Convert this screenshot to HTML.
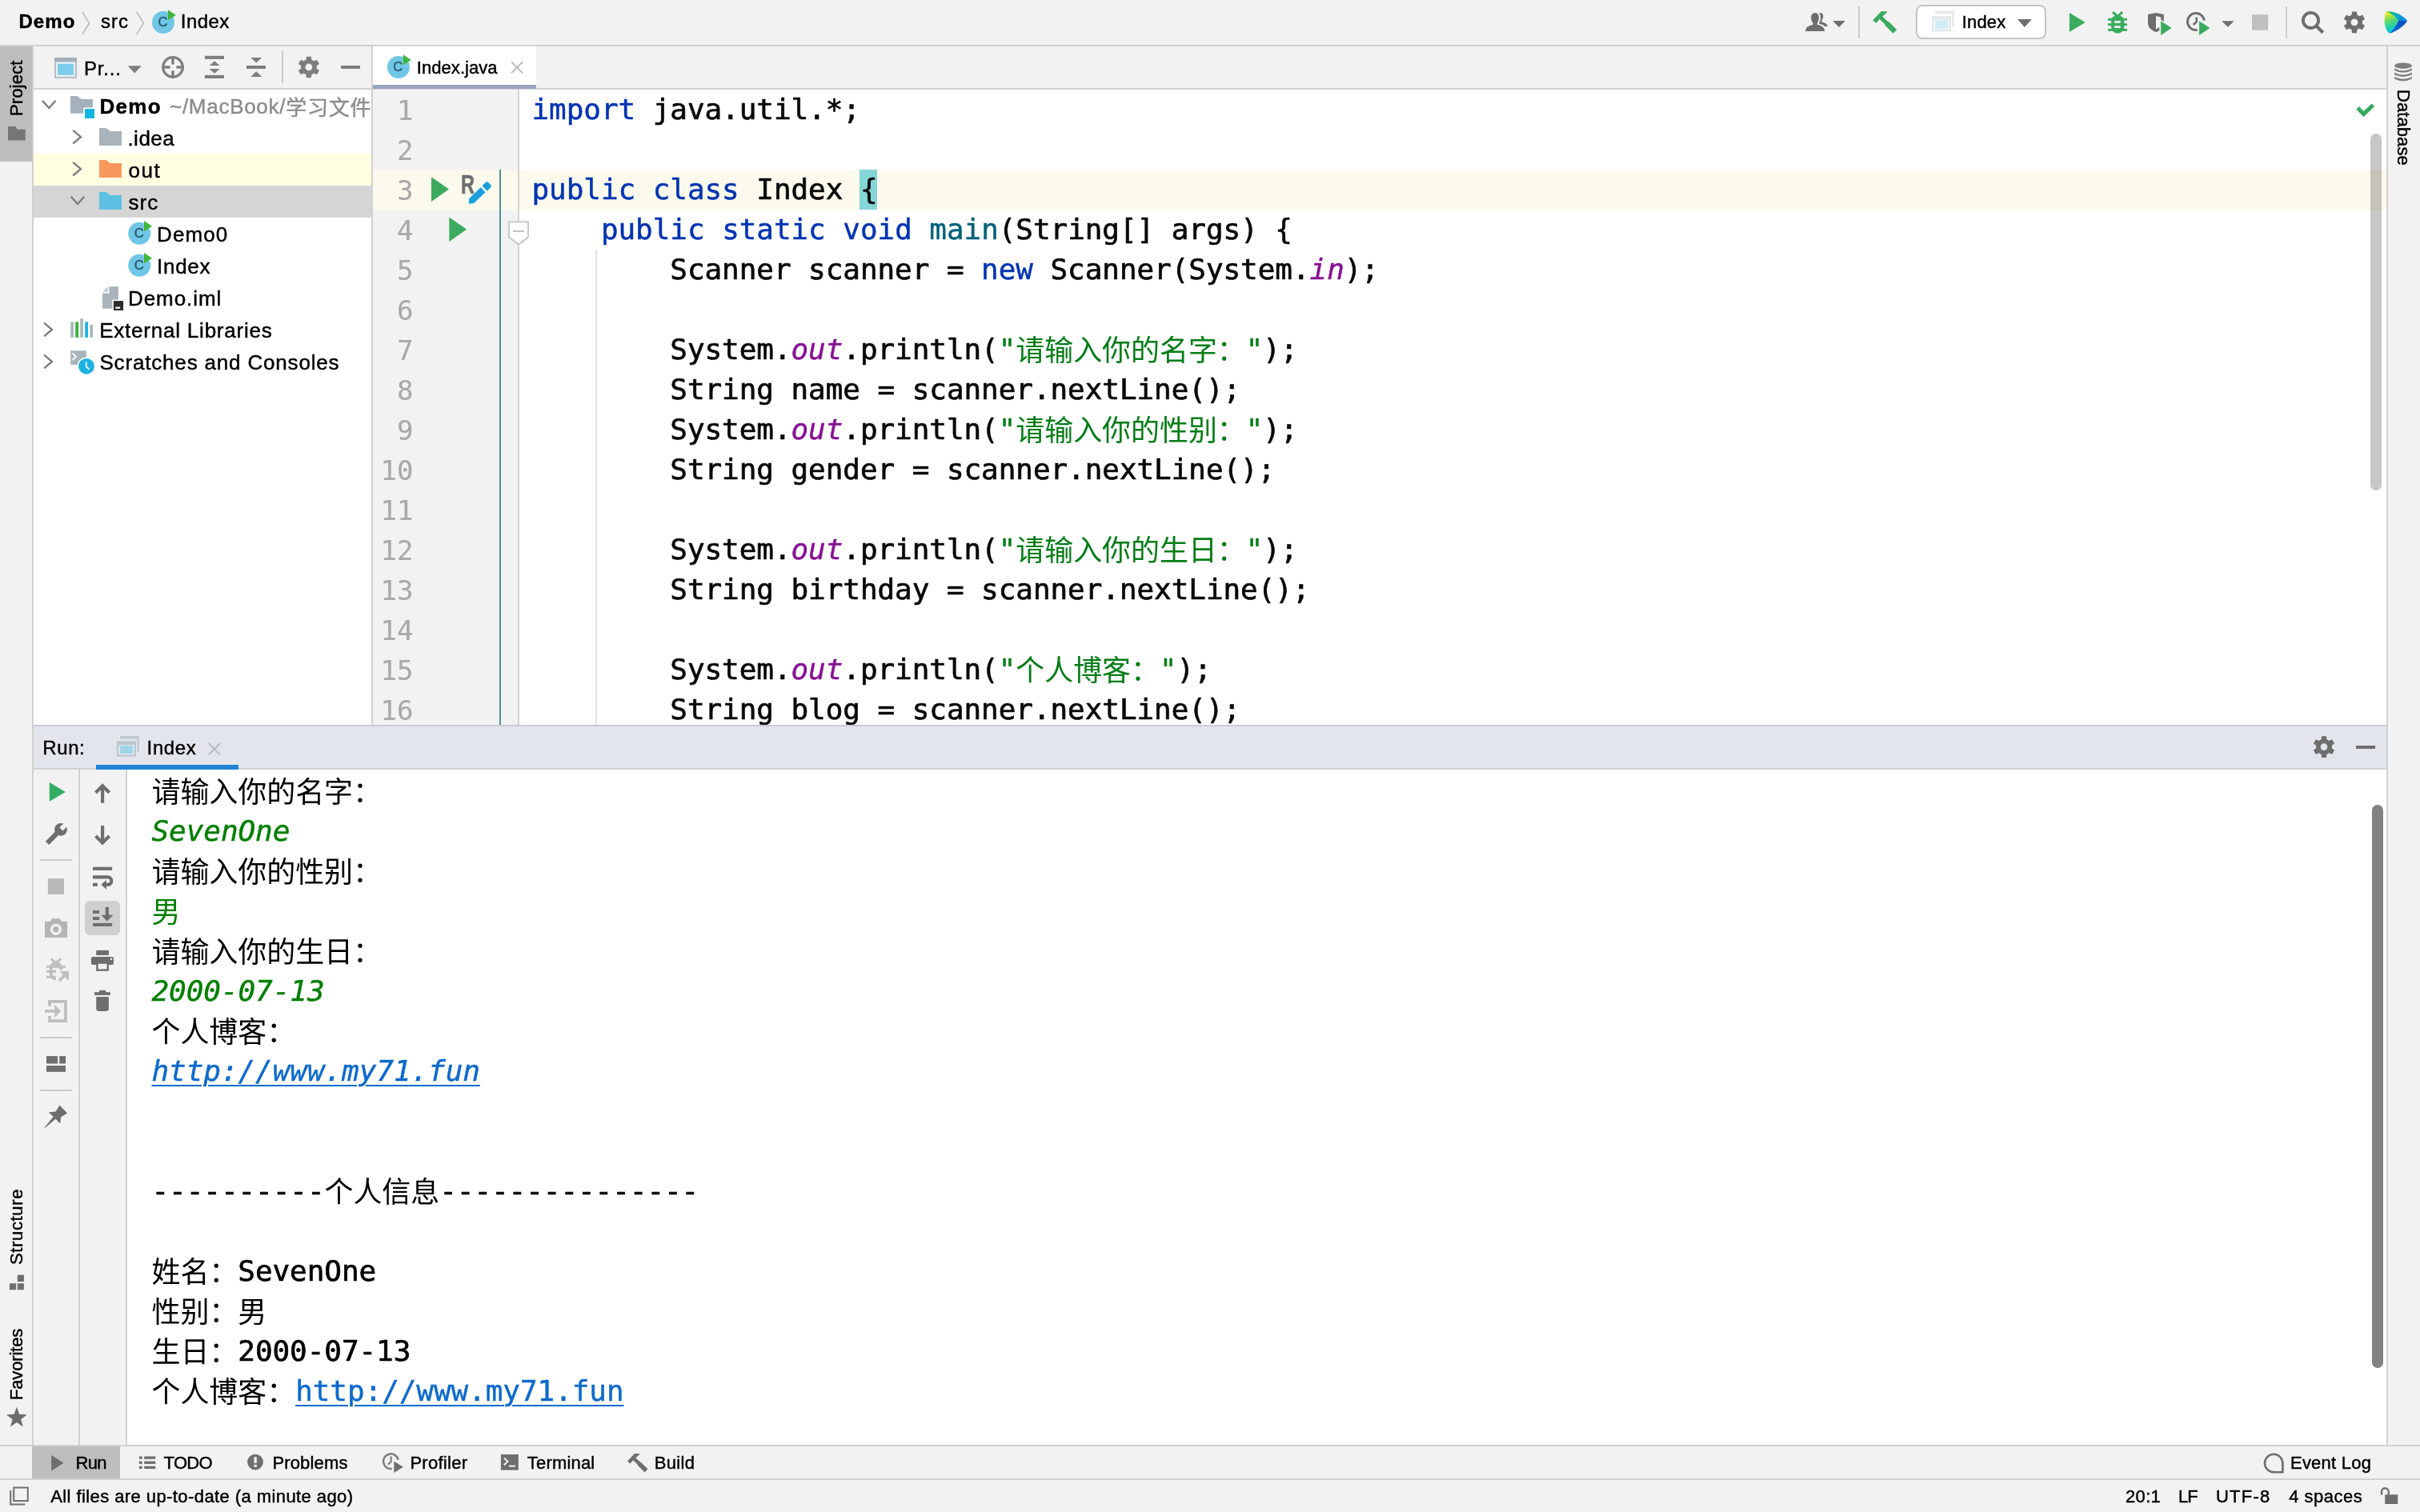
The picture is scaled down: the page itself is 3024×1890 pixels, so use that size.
<!DOCTYPE html>
<html lang="zh"><head><meta charset="utf-8"><title>Demo – Index.java</title>
<style>
html,body{margin:0;padding:0;}
body{width:3024px;height:1890px;position:relative;overflow:hidden;background:#f2f2f2;font-family:"Liberation Sans","Noto Sans CJK SC",sans-serif;}
div,span,pre,svg{position:absolute;margin:0;padding:0;}
span{white-space:pre;display:block;-webkit-text-stroke:0.45px;}
span span,span i,span u,span a{position:static;display:inline;}
.m{font-family:"DejaVu Sans Mono","Liberation Mono","Noto Sans CJK SC",monospace;}
.c{font-family:"DejaVu Sans Mono","Liberation Mono","Noto Sans CJK SC",monospace;font-size:36px;line-height:50px;letter-spacing:-0.074px;color:#080808;-webkit-text-stroke:0.7px;}.k{color:#0033b3;}.f{color:#00627a;}.p{color:#871094;font-style:italic;}.s{color:#067d17;}.z{position:relative;top:1.6px;-webkit-text-stroke:0;}.n{color:#a9a9a9;text-align:right;width:120px;font-size:34px;letter-spacing:0;-webkit-text-stroke:0.15px;}.g{color:#007f00;}.gi{color:#007f00;font-style:italic;}.l{color:#0e6acc;text-decoration:underline;text-decoration-thickness:2px;text-underline-offset:5px;}.li{font-style:italic;}
#root{left:0;top:0;width:3024px;height:1890px;will-change:transform;}
</style></head><body><div id="root">
<div style="left:0px;top:56px;width:3024px;height:2px;background:#d1d1d1;"></div>
<span style="left:23.40px;top:9.18px;font-size:24px;line-height:36px;font-weight:bold;letter-spacing:1.100px;">Demo</span>
<span style="left:126.00px;top:9.18px;font-size:24px;line-height:36px;letter-spacing:1.050px;">src</span>
<span style="left:225.80px;top:9.18px;font-size:24px;line-height:36px;letter-spacing:0.450px;">Index</span>
<div style="left:2394px;top:6px;width:163px;height:43px;background:#fff;box-sizing:border-box;border:2px solid #c4c4c4;border-radius:8px;"></div>
<span style="left:2451.80px;top:11.48px;font-size:22px;line-height:33px;letter-spacing:0.150px;">Index</span>
<div style="left:0px;top:58px;width:40px;height:144px;background:#bebebe;"></div>
<div style="left:40px;top:58px;width:2px;height:1748px;background:#d1d1d1;"></div>
<span style="left:28.00px;top:121.08px;transform-origin:0 24.12px;transform:rotate(-90deg);font-size:22px;line-height:33px;letter-spacing:0.167px;">Project</span>
<span style="left:27.80px;top:1557.28px;transform-origin:0 24.12px;transform:rotate(-90deg);font-size:22px;line-height:33px;letter-spacing:0.662px;">Structure</span>
<span style="left:27.80px;top:1725.68px;transform-origin:0 24.12px;transform:rotate(-90deg);font-size:22px;line-height:33px;letter-spacing:-0.138px;">Favorites</span>
<div style="left:42px;top:110px;width:422px;height:2px;background:#d1d1d1;"></div>
<div style="left:42px;top:112px;width:422px;height:794px;background:#fff;"></div>
<div style="left:42px;top:192px;width:422px;height:40px;background:#feffe1;"></div>
<div style="left:42px;top:232px;width:422px;height:40px;background:#d5d5d5;"></div>
<div style="left:464px;top:58px;width:2px;height:848px;background:#d1d1d1;"></div>
<span style="left:105.00px;top:67.68px;font-size:24px;line-height:36px;letter-spacing:0.800px;">Pr...</span>
<span style="left:124.40px;top:113.59px;font-size:26px;line-height:39px;font-weight:bold;letter-spacing:1.300px;">Demo</span>
<span style="left:159.40px;top:153.59px;font-size:26px;line-height:39px;letter-spacing:0.500px;">.idea</span>
<span style="left:160.60px;top:193.59px;font-size:26px;line-height:39px;letter-spacing:1.500px;">out</span>
<span style="left:160.60px;top:233.59px;font-size:26px;line-height:39px;letter-spacing:0.950px;">src</span>
<span style="left:196.00px;top:273.59px;font-size:26px;line-height:39px;letter-spacing:1.100px;">Demo0</span>
<span style="left:196.00px;top:313.59px;font-size:26px;line-height:39px;letter-spacing:0.725px;">Index</span>
<span style="left:160.00px;top:353.59px;font-size:26px;line-height:39px;letter-spacing:0.929px;">Demo.iml</span>
<span style="left:124.20px;top:393.59px;font-size:26px;line-height:39px;letter-spacing:0.782px;">External Libraries</span>
<span style="left:124.40px;top:433.59px;font-size:26px;line-height:39px;letter-spacing:0.829px;">Scratches and Consoles</span>
<div style="left:205px;top:112px;width:259px;height:40px;overflow:hidden">
<span style="left:7.00px;top:1.59px;font-size:26px;line-height:39px;color:#8c8c8c;letter-spacing:0.720px;">~/MacBook/<span style="position:relative;top:2px">学习文件</span>/</span>
</div>
<div style="left:466px;top:110px;width:2516px;height:2px;background:#d1d1d1;"></div>
<div style="left:466px;top:58px;width:204px;height:52px;background:#fff;"></div>
<div style="left:466px;top:106px;width:204px;height:5.4px;background:#99a6c2;"></div>
<span style="left:520.80px;top:68.08px;font-size:22px;line-height:33px;letter-spacing:0.056px;">Index.java</span>
<div style="left:466px;top:112px;width:2516px;height:794px;background:#fff;"></div>
<div style="left:466px;top:112px;width:182px;height:794px;background:#f2f2f2;"></div>
<div style="left:466px;top:212px;width:2516px;height:50px;background:#fcfaed;"></div>
<div style="left:647px;top:112px;width:2px;height:794px;background:#d4d4d4;"></div>
<div style="left:624px;top:212px;width:2px;height:694px;background:#508e99;"></div>
<div style="left:744px;top:312px;width:2px;height:594px;background:#e2e2e2;"></div>
<div style="left:1074px;top:212px;width:22px;height:50px;background:#84d6d7;"></div>
<div style="left:2962px;top:167px;width:14px;height:446px;background:rgba(0,0,0,0.22);border-radius:7px;"></div>
<div style="left:2982px;top:58px;width:2px;height:1748px;background:#d1d1d1;"></div>
<span style="left:2996.00px;top:88.48px;transform-origin:0 24.12px;transform:rotate(90deg);font-size:22px;line-height:33px;letter-spacing:0.057px;">Database</span>
<div style="left:42px;top:906px;width:2940px;height:2px;background:#c9ccd2;"></div>
<div style="left:42px;top:908px;width:2940px;height:52px;background:#e2e6ec;"></div>
<div style="left:42px;top:960px;width:2940px;height:2px;background:#cfd1d4;"></div>
<div style="left:120px;top:956px;width:178px;height:6px;background:#2083d5;"></div>
<div style="left:42px;top:962px;width:2940px;height:844px;background:#fff;"></div>
<div style="left:42px;top:962px;width:56px;height:844px;background:#f2f2f2;"></div>
<div style="left:98px;top:962px;width:2px;height:844px;background:#d1d1d1;"></div>
<div style="left:100px;top:962px;width:57px;height:844px;background:#f2f2f2;"></div>
<div style="left:157px;top:962px;width:2px;height:844px;background:#d1d1d1;"></div>
<div style="left:106px;top:1126px;width:44px;height:43px;background:#cfcfcf;border-radius:6px;"></div>
<span style="left:53.20px;top:917.38px;font-size:24px;line-height:36px;letter-spacing:0.633px;">Run:</span>
<span style="left:183.60px;top:917.38px;font-size:24px;line-height:36px;letter-spacing:0.625px;">Index</span>
<div style="left:2964px;top:1006px;width:14px;height:704px;background:#828282;border-radius:7px;"></div>
<div style="left:0px;top:1806px;width:3024px;height:2px;background:#d1d1d1;"></div>
<div style="left:40px;top:1808px;width:110px;height:40px;background:#bdbdbd;"></div>
<div style="left:0px;top:1848px;width:3024px;height:2px;background:#d1d1d1;"></div>
<span style="left:94.40px;top:1811.58px;font-size:22px;line-height:33px;letter-spacing:-0.650px;">Run</span>
<span style="left:204.60px;top:1811.58px;font-size:22px;line-height:33px;letter-spacing:-0.700px;">TODO</span>
<span style="left:340.40px;top:1811.58px;font-size:22px;line-height:33px;letter-spacing:0.157px;">Problems</span>
<span style="left:512.40px;top:1811.58px;font-size:22px;line-height:33px;letter-spacing:0.271px;">Profiler</span>
<span style="left:658.80px;top:1811.58px;font-size:22px;line-height:33px;letter-spacing:0.186px;">Terminal</span>
<span style="left:817.80px;top:1811.58px;font-size:22px;line-height:33px;letter-spacing:0.325px;">Build</span>
<span style="left:2862.00px;top:1811.58px;font-size:22px;line-height:33px;letter-spacing:0.225px;">Event Log</span>
<span style="left:63.20px;top:1853.58px;font-size:22px;line-height:33px;letter-spacing:0.418px;">All files are up-to-date (a minute ago)</span>
<span style="left:2656.00px;top:1853.58px;font-size:22px;line-height:33px;letter-spacing:0.333px;">20:1</span>
<span style="left:2722.00px;top:1853.58px;font-size:22px;line-height:33px;letter-spacing:-1.000px;">LF</span>
<span style="left:2769.00px;top:1853.58px;font-size:22px;line-height:33px;letter-spacing:1.225px;">UTF-8</span>
<span style="left:2860.20px;top:1853.58px;font-size:22px;line-height:33px;letter-spacing:0.514px;">4 spaces</span>
<div style="left:466px;top:112px;width:2516px;height:794px;overflow:hidden">
<span class="c n" style="left:-69.60000000000002px;top:0.5px">1</span>
<span class="c" style="left:198.5px;top:0.3px"><span class="k">import</span> java.util.*;</span>
<span class="c n" style="left:-69.60000000000002px;top:50.5px">2</span>
<span class="c n" style="left:-69.60000000000002px;top:100.5px">3</span>
<span class="c" style="left:198.5px;top:100.3px"><span class="k">public</span> <span class="k">class</span> Index {</span>
<span class="c n" style="left:-69.60000000000002px;top:150.5px">4</span>
<span class="c" style="left:198.5px;top:150.3px">    <span class="k">public</span> <span class="k">static</span> <span class="k">void</span> <span class="f">main</span>(String[] args) {</span>
<span class="c n" style="left:-69.60000000000002px;top:200.5px">5</span>
<span class="c" style="left:198.5px;top:200.3px">        Scanner scanner = <span class="k">new</span> Scanner(System.<span class="p">in</span>);</span>
<span class="c n" style="left:-69.60000000000002px;top:250.5px">6</span>
<span class="c n" style="left:-69.60000000000002px;top:300.5px">7</span>
<span class="c" style="left:198.5px;top:300.3px">        System.<span class="p">out</span>.println(<span class="s">"<span class="z">请输入你的名字：</span>"</span>);</span>
<span class="c n" style="left:-69.60000000000002px;top:350.5px">8</span>
<span class="c" style="left:198.5px;top:350.3px">        String name = scanner.nextLine();</span>
<span class="c n" style="left:-69.60000000000002px;top:400.5px">9</span>
<span class="c" style="left:198.5px;top:400.3px">        System.<span class="p">out</span>.println(<span class="s">"<span class="z">请输入你的性别：</span>"</span>);</span>
<span class="c n" style="left:-69.60000000000002px;top:450.5px">10</span>
<span class="c" style="left:198.5px;top:450.3px">        String gender = scanner.nextLine();</span>
<span class="c n" style="left:-69.60000000000002px;top:500.5px">11</span>
<span class="c n" style="left:-69.60000000000002px;top:550.5px">12</span>
<span class="c" style="left:198.5px;top:550.3px">        System.<span class="p">out</span>.println(<span class="s">"<span class="z">请输入你的生日：</span>"</span>);</span>
<span class="c n" style="left:-69.60000000000002px;top:600.5px">13</span>
<span class="c" style="left:198.5px;top:600.3px">        String birthday = scanner.nextLine();</span>
<span class="c n" style="left:-69.60000000000002px;top:650.5px">14</span>
<span class="c n" style="left:-69.60000000000002px;top:700.5px">15</span>
<span class="c" style="left:198.5px;top:700.3px">        System.<span class="p">out</span>.println(<span class="s">"<span class="z">个人博客：</span>"</span>);</span>
<span class="c n" style="left:-69.60000000000002px;top:750.5px">16</span>
<span class="c" style="left:198.5px;top:750.3px">        String blog = scanner.nextLine();</span>
</div>
<span class="c" style="color:#000;left:189.5px;top:964.3px"><span class="z">请输入你的名字：</span></span>
<span class="c" style="color:#000;left:189.5px;top:1014.3px"><span class="gi">SevenOne</span></span>
<span class="c" style="color:#000;left:189.5px;top:1064.3px"><span class="z">请输入你的性别：</span></span>
<span class="c" style="color:#000;left:189.5px;top:1114.3px"><span class="g"><span class="z">男</span></span></span>
<span class="c" style="color:#000;left:189.5px;top:1164.3px"><span class="z">请输入你的生日：</span></span>
<span class="c" style="color:#000;left:189.5px;top:1214.3px"><span class="gi">2000-07-13</span></span>
<span class="c" style="color:#000;left:189.5px;top:1264.3px"><span class="z">个人博客：</span></span>
<span class="c" style="color:#000;left:189.5px;top:1314.3px"><span class="l li">http://www.my71.fun</span></span>
<span class="c" style="color:#000;left:189.5px;top:1464.3px">----------<span class="z">个人信息</span>---------------</span>
<span class="c" style="color:#000;left:189.5px;top:1564.3px"><span class="z">姓名：</span>SevenOne</span>
<span class="c" style="color:#000;left:189.5px;top:1614.3px"><span class="z">性别：男</span></span>
<span class="c" style="color:#000;left:189.5px;top:1664.3px"><span class="z">生日：</span>2000-07-13</span>
<span class="c" style="color:#000;left:189.5px;top:1714.3px"><span class="z">个人博客：</span><span class="l">http://www.my71.fun</span></span>
<svg width="3024" height="1890" viewBox="0 0 3024 1890" style="left:0;top:0">
<path d="M102.80 14.60 L111.60 28.90 L102.80 43.20" fill="none" stroke="#b9b9b9" stroke-width="1.6" />
<path d="M170.60 14.60 L179.40 28.90 L170.60 43.20" fill="none" stroke="#b9b9b9" stroke-width="1.6" />
<circle cx="204.00" cy="28.00" r="14.00" fill="#6fc6e7" />
<text x="203.40" y="33.30" text-anchor="middle" font-size="16.5" fill="#2b5a6c" stroke="#2b5a6c" stroke-width="0.45" style="font-family:'Liberation Sans',sans-serif">C</text>
<polygon points="209.30,11.60 209.30,26.10 220.60,18.80" fill="#f2f2f2" fill-opacity="0.35"/>
<polygon points="209.80,12.30 209.80,25.60 219.80,18.90" fill="#3fb43c" />
<path d="M2273.1 16.1 C2276.5 15.6 2278.4 17.4 2278.2 20.6 C2278.0 23.0 2277.2 24.6 2276.4 25.9 L2276.6 27.4 C2280.8 28.4 2283.4 30.0 2283.9 32.9 L2280.2 32.9 C2278.0 31.0 2275.6 30.2 2272.9 29.6 L2272.9 29.0 C2274.6 27.0 2275.1 24.0 2275.0 21.8 C2274.9 19.4 2274.4 17.6 2273.1 16.1 Z" fill="#6e6e6e" />
<path d="M2256 38.9 C2256.4 34.5 2259 32.4 2265.3 31.0 L2265.6 29.0 C2263.6 27.0 2263.1 24.5 2263.1 21.8 C2263.1 18.0 2265.2 16.2 2268.0 16.2 C2270.8 16.2 2272.9 18.0 2272.9 21.8 C2272.9 24.5 2272.4 27.0 2270.7 29.0 L2271.0 30.7 C2277.0 32.2 2279.8 34.5 2280.1 38.9 Z" fill="#6e6e6e" />
<polygon points="2290.20,26.10 2305.80,26.10 2298.00,34.00" fill="#6e6e6e" />
<rect x="2322.00" y="8.00" width="2.00" height="40.00" fill="#cdcdcd" />
<polygon points="2340.20,25.30 2350.60,14.20 2357.90,14.20 2357.90,15.60 2352.20,20.50 2358.60,26.40 2360.50,27.50 2370.20,36.90 2365.60,41.80 2355.40,31.60 2355.10,30.00 2348.60,23.90 2344.30,28.90" fill="#39aa60" />
<rect x="2418.20" y="13.80" width="23.70" height="3.50" fill="#e6e9ec" />
<rect x="2439.40" y="13.80" width="2.50" height="19.60" fill="#e6e9ec" />
<rect x="2414.00" y="20.00" width="24.10" height="19.40" fill="#e3e8ec" />
<rect x="2416.20" y="24.80" width="19.70" height="12.40" fill="#ffffff" fill-opacity="0.55"/>
<rect x="2418.30" y="25.80" width="15.80" height="9.90" fill="#d2ebf6" />
<polygon points="2521.00,24.00 2538.80,24.00 2529.90,33.90" fill="#6e6e6e" />
<polygon points="2586.00,16.00 2586.00,40.00 2605.80,28.00" fill="#3aab5f" />
<g transform="translate(2634.0 14.1)">
<path d="M6.0 1.0 L11.6 6.0 M18.2 1.0 L12.6 6.0" stroke="#3aab5f" stroke-width="3.2" fill="none"/>
<path d="M12.1 4.9 C17.4 4.9 20.3 8.6 20.3 12.6 L20.3 19.4 C20.3 24.2 16.6 27.5 12.1 27.5 C7.6 27.5 4.2 24.2 4.2 19.4 L4.2 12.6 C4.2 8.6 6.8 4.9 12.1 4.9 Z" fill="#3aab5f" />
<rect x="0.00" y="8.70" width="24.00" height="2.90" fill="#3aab5f" />
<rect x="0.00" y="15.10" width="24.00" height="2.90" fill="#3aab5f" />
<rect x="0.00" y="21.90" width="24.00" height="2.90" fill="#3aab5f" />
<rect x="8.10" y="12.00" width="7.70" height="2.70" fill="#f2f2f2" />
<rect x="8.10" y="18.20" width="7.70" height="2.70" fill="#f2f2f2" />
</g>
<path d="M2684.0 18.0 L2694 16.0 L2703.9 18.0 L2703.9 30.9 C2703.4 35.4 2699.4 38.2 2694 40.0 C2687.6 37.6 2684.0 34.0 2684.0 28.4 Z" fill="#6e6e6e" />
<path d="M2694 19.9 L2700.2 21.4 L2700.2 30.5 C2700.2 33.0 2697.5 35.0 2694 36.2 Z" fill="#f2f2f2" />
<polygon points="2698.40,23.40 2698.40,46.80 2716.60,35.10" fill="#f2f2f2" />
<polygon points="2700.20,26.30 2700.20,43.90 2713.60,35.10" fill="#3aab5f" />
<path d="M2754.4 25.6 A10.5 10.5 0 1 0 2745.8 37.4" fill="none" stroke="#6e6e6e" stroke-width="2.9"/>
<path d="M2744.80 21.40 L2744.80 27.20 L2740.60 31.00" fill="none" stroke="#6e6e6e" stroke-width="2.6" />
<polygon points="2746.40,23.40 2746.40,46.80 2764.40,35.10" fill="#f2f2f2" />
<polygon points="2748.10,26.30 2748.10,43.90 2761.50,35.10" fill="#3aab5f" />
<polygon points="2776.20,26.30 2791.70,26.30 2783.95,33.80" fill="#6e6e6e" />
<rect x="2814.00" y="18.20" width="20.20" height="19.60" fill="#c0c0c0" />
<rect x="2856.00" y="8.00" width="2.00" height="40.00" fill="#cdcdcd" />
<circle cx="2887.5" cy="25.4" r="9.6" fill="none" stroke="#6e6e6e" stroke-width="3.8"/>
<path d="M2894.40 32.60 L2902.80 40.70" fill="none" stroke="#6e6e6e" stroke-width="4.2" />
<path d="M2944.78 18.82 L2944.48 15.14 L2939.52 15.14 L2939.22 18.82 L2935.52 20.95 L2932.19 19.37 L2929.71 23.67 L2932.74 25.76 L2932.74 30.04 L2929.71 32.13 L2932.19 36.43 L2935.52 34.85 L2939.22 36.98 L2939.52 40.66 L2944.48 40.66 L2944.78 36.98 L2948.48 34.85 L2951.81 36.43 L2954.29 32.13 L2951.26 30.04 L2951.26 25.76 L2954.29 23.67 L2951.81 19.37 L2948.48 20.95 Z M2937.00 27.90 a5.0 5.0 0 1 0 10.0 0 a5.0 5.0 0 1 0 -10.0 0 Z" fill="#6e6e6e" fill-rule="evenodd" stroke="#6e6e6e" stroke-width="1.2" stroke-linejoin="round"/>
<defs><linearGradient id="lg1" x1="0.3" y1="0" x2="0.5" y2="1"><stop offset="0" stop-color="#f8f012"/><stop offset="0.45" stop-color="#5ad870"/><stop offset="0.8" stop-color="#0cd0c0"/><stop offset="1" stop-color="#10a8f0"/></linearGradient><linearGradient id="lg2" x1="0" y1="0" x2="1" y2="0.6"><stop offset="0" stop-color="#0cc050"/><stop offset="0.5" stop-color="#0ab0b8"/><stop offset="1" stop-color="#0e88ea"/></linearGradient><linearGradient id="lg3" x1="1" y1="0" x2="0" y2="1"><stop offset="0" stop-color="#0a4ab4"/><stop offset="1" stop-color="#0a78da"/></linearGradient></defs>
<path d="M2982 14.2 C2993 13.6 3003 19 3008.1 26 L2996.9 26 C2994 21 2988 17 2982 14.2 Z" fill="url(#lg2)" />
<path d="M2996.9 26 L3008.1 26 C3004 33 2994 40 2985.4 41.8 C2990.5 37 2994.5 31 2996.9 26 Z" fill="url(#lg3)" />
<path d="M2982 14.2 C2988 17 2994 21 2996.9 26 C2994.5 31 2990.5 37 2985.4 41.8 C2979.6 36 2977.6 24 2982 14.2 Z" fill="url(#lg1)" />
<path d="M10 158.1 L19.6 158.1 L21.4 161.8 L31.7 161.8 L31.7 175.6 L10 175.6 Z" fill="#757575" />
<rect x="21.80" y="1593.60" width="8.10" height="8.50" fill="#6e6e6e" />
<rect x="11.90" y="1604.20" width="8.30" height="8.00" fill="#6e6e6e" />
<rect x="21.80" y="1604.20" width="8.10" height="8.00" fill="#6e6e6e" />
<polygon points="20.90,1758.80 24.19,1767.87 33.83,1768.20 26.23,1774.13 28.89,1783.40 20.90,1778.00 12.91,1783.40 15.57,1774.13 7.97,1768.20 17.61,1767.87" fill="#6e6e6e" />
<rect x="68.00" y="72.00" width="28.00" height="25.90" fill="#b3bfc8" />
<rect x="68.00" y="72.00" width="28.00" height="5.60" fill="#a3b0ba" />
<rect x="70.20" y="77.60" width="23.60" height="18.10" fill="#f4f8fa" />
<rect x="72.00" y="79.60" width="20.00" height="14.30" fill="#7dcdea" />
<polygon points="159.60,82.20 176.80,82.20 168.20,91.60" fill="#7e7e7e" />
<circle cx="216.0" cy="84.0" r="12.3" fill="none" stroke="#7e7e7e" stroke-width="3.2"/>
<rect x="214.30" y="71.00" width="3.40" height="9.60" fill="#7e7e7e" />
<rect x="214.30" y="88.40" width="3.40" height="9.60" fill="#7e7e7e" />
<rect x="203.00" y="82.30" width="9.60" height="3.40" fill="#7e7e7e" />
<rect x="220.40" y="82.30" width="9.60" height="3.40" fill="#7e7e7e" />
<rect x="256.00" y="69.80" width="24.00" height="4.10" fill="#7e7e7e" />
<rect x="256.00" y="93.90" width="24.00" height="4.10" fill="#7e7e7e" />
<polygon points="261.60,82.00 274.60,82.00 268.10,76.20" fill="#7e7e7e" />
<polygon points="261.60,86.00 274.60,86.00 268.10,91.80" fill="#7e7e7e" />
<rect x="308.00" y="82.00" width="24.00" height="4.00" fill="#7e7e7e" />
<polygon points="313.20,71.90 327.20,71.90 320.20,78.50" fill="#7e7e7e" />
<polygon points="313.20,95.90 327.20,95.90 320.20,89.30" fill="#7e7e7e" />
<rect x="352.00" y="64.00" width="2.00" height="40.00" fill="#cbcbcb" />
<path d="M388.68 74.92 L388.38 71.24 L383.42 71.24 L383.12 74.92 L379.42 77.05 L376.09 75.47 L373.61 79.77 L376.64 81.86 L376.64 86.14 L373.61 88.23 L376.09 92.53 L379.42 90.95 L383.12 93.08 L383.42 96.76 L388.38 96.76 L388.68 93.08 L392.38 90.95 L395.71 92.53 L398.19 88.23 L395.16 86.14 L395.16 81.86 L398.19 79.77 L395.71 75.47 L392.38 77.05 Z M380.90 84.00 a5.0 5.0 0 1 0 10.0 0 a5.0 5.0 0 1 0 -10.0 0 Z" fill="#7e7e7e" fill-rule="evenodd" stroke="#7e7e7e" stroke-width="1.2" stroke-linejoin="round"/>
<rect x="426.00" y="82.00" width="24.00" height="4.00" fill="#7e7e7e" />
<path d="M52.90 125.80 L61.20 135.00 L69.50 125.80" fill="none" stroke="#7e7e7e" stroke-width="2.4" />
<path d="M88.0 120.0 L96.5 120.0 L101.8 123.9 L116.0 123.9 L116.0 141.8 L88.0 141.8 Z" fill="#a6b2bb" />
<rect x="104.40" y="134.50" width="15.20" height="15.00" fill="#ffffff" />
<rect x="106.00" y="136.10" width="12.00" height="11.80" fill="#0fb4e3" />
<path d="M91.20 162.90 L101.00 171.20 L91.20 179.50" fill="none" stroke="#7e7e7e" stroke-width="2.4" />
<path d="M124.0 160.1 L132.5 160.1 L137.8 164.0 L152.0 164.0 L152.0 181.9 L124.0 181.9 Z" fill="#a8b3bb" />
<path d="M91.20 202.90 L101.00 211.20 L91.20 219.50" fill="none" stroke="#7e7e7e" stroke-width="2.4" />
<path d="M124.0 200.1 L132.5 200.1 L137.8 204.0 L152.0 204.0 L152.0 221.9 L124.0 221.9 Z" fill="#f8985c" />
<path d="M88.70 245.80 L97.00 255.00 L105.30 245.80" fill="none" stroke="#7e7e7e" stroke-width="2.4" />
<path d="M124.0 240.1 L132.5 240.1 L137.8 244.0 L152.0 244.0 L152.0 261.9 L124.0 261.9 Z" fill="#5ec0e2" />
<circle cx="174.20" cy="291.80" r="14.00" fill="#6fc6e7" />
<text x="173.60" y="297.10" text-anchor="middle" font-size="16.5" fill="#2b5a6c" stroke="#2b5a6c" stroke-width="0.45" style="font-family:'Liberation Sans',sans-serif">C</text>
<polygon points="179.50,275.40 179.50,289.90 190.80,282.60" fill="#fff" fill-opacity="0.35"/>
<polygon points="180.00,276.10 180.00,289.40 190.00,282.70" fill="#3fb43c" />
<circle cx="174.20" cy="331.80" r="14.00" fill="#6fc6e7" />
<text x="173.60" y="337.10" text-anchor="middle" font-size="16.5" fill="#2b5a6c" stroke="#2b5a6c" stroke-width="0.45" style="font-family:'Liberation Sans',sans-serif">C</text>
<polygon points="179.50,315.40 179.50,329.90 190.80,322.60" fill="#fff" fill-opacity="0.35"/>
<polygon points="180.00,316.10 180.00,329.40 190.00,322.70" fill="#3fb43c" />
<path d="M136.4 358.2 L147.9 358.2 L147.9 385.8 L128 385.8 L128 366.4 L136.4 366.4 Z" fill="#a9b4bc" />
<polygon points="128.00,364.80 134.80,358.20 134.80,364.80" fill="#c3cbd1" />
<rect x="140.40" y="374.60" width="15.20" height="14.90" fill="#ffffff" />
<rect x="141.90" y="376.10" width="12.20" height="11.90" fill="#2b2b2b" />
<rect x="144.20" y="383.60" width="5.90" height="2.20" fill="#ffffff" />
<path d="M55.10 403.70 L64.90 412.00 L55.10 420.30" fill="none" stroke="#7e7e7e" stroke-width="2.4" />
<rect x="88.20" y="402.30" width="3.70" height="19.60" fill="#a9b4bc" />
<rect x="94.20" y="402.30" width="3.90" height="19.60" fill="#3bb43a" />
<rect x="100.30" y="398.30" width="3.60" height="23.60" fill="#a9b4bc" />
<rect x="106.20" y="402.30" width="3.80" height="19.60" fill="#1eb4e4" />
<rect x="112.40" y="406.00" width="3.60" height="15.90" fill="#a9b4bc" />
<path d="M55.10 443.70 L64.90 452.00 L55.10 460.30" fill="none" stroke="#7e7e7e" stroke-width="2.4" />
<rect x="88.20" y="438.30" width="19.60" height="17.60" fill="#a9b4bc" />
<path d="M90.60 441.60 L95.00 445.80 L90.60 450.00" fill="none" stroke="#ffffff" stroke-width="1.8" />
<circle cx="108.00" cy="457.80" r="11.40" fill="#ffffff" />
<circle cx="108.00" cy="457.80" r="9.90" fill="#1cb3e4" />
<path d="M107.80 452.60 L107.80 458.40 L111.60 461.60" fill="none" stroke="#ffffff" stroke-width="1.8" />
<circle cx="497.90" cy="84.00" r="14.00" fill="#6fc6e7" />
<text x="497.30" y="89.30" text-anchor="middle" font-size="16.5" fill="#2b5a6c" stroke="#2b5a6c" stroke-width="0.45" style="font-family:'Liberation Sans',sans-serif">C</text>
<polygon points="503.20,67.60 503.20,82.10 514.50,74.80" fill="#fff" fill-opacity="0.35"/>
<polygon points="503.70,68.30 503.70,81.60 513.70,74.90" fill="#3fb43c" />
<path d="M639.00 77.40 L653.00 91.20" fill="none" stroke="#b9b9b9" stroke-width="2.0" />
<path d="M653.00 77.40 L639.00 91.20" fill="none" stroke="#b9b9b9" stroke-width="2.0" />
<polygon points="539.00,221.30 539.00,251.90 561.00,236.60" fill="#3dab5f" />
<polygon points="561.30,271.60 561.30,302.00 583.10,286.80" fill="#3dab5f" />
<text x="576.0" y="241.9" font-size="33" font-weight="bold" fill="#6e6e6e" stroke="#6e6e6e" stroke-width="0.7" textLength="17" lengthAdjust="spacingAndGlyphs" style="font-family:'Liberation Sans',sans-serif">R</text>
<g transform="translate(585.4 254.6) rotate(-43.5)">
<path d="M-0.4 0.4 L5.0 -4.5 L25.4 -4.5 L25.4 4.5 L5.0 4.5 Z" fill="#1b9fdc" stroke="#e9f6fc" stroke-width="0.8"/>
<path d="M27.8 -4.5 L33.4 -4.5 Q36.4 -4.5 36.4 -1.5 L36.4 1.5 Q36.4 4.5 33.4 4.5 L27.8 4.5 Z" fill="#1b9fdc" />
</g>
<path d="M636.0 277.2 L660.0 277.2 L660.0 296.4 L648.0 305.8 L636.0 296.4 Z" fill="#ffffff" stroke="#c9c9c9" stroke-width="2"/>
<rect x="641.00" y="287.90" width="14.00" height="2.00" fill="#c2c2c2" />
<path d="M2946.20 134.80 L2953.60 142.60 L2965.40 131.20" fill="none" stroke="#36aa5f" stroke-width="5.0" />
<g fill="#7e7e7e">
<ellipse cx="3003" cy="82.2" rx="11" ry="3.7"/>
<path d="M2992 85.6 q11 5.4 22 0 l0 2.4 q-11 5.6 -22 0 Z"/>
<path d="M2992 90.8 q11 5.4 22 0 l0 2.4 q-11 5.6 -22 0 Z"/>
<path d="M2992 96.0 q11 5.4 22 0 l0 2.4 q-11 5.6 -22 0 Z"/>
</g>
<rect x="150.10" y="920.10" width="23.70" height="3.50" fill="#c0c8d0" />
<rect x="171.30" y="920.10" width="2.50" height="19.60" fill="#c0c8d0" />
<rect x="145.90" y="926.30" width="24.10" height="19.40" fill="#bcc6cf" />
<rect x="148.10" y="931.10" width="19.70" height="12.40" fill="#ffffff" fill-opacity="0.55"/>
<rect x="150.20" y="932.10" width="15.80" height="9.90" fill="#9fd5e9" />
<path d="M260.80 929.20 L275.00 943.40" fill="none" stroke="#b3b9c0" stroke-width="2.0" />
<path d="M275.00 929.20 L260.80 943.40" fill="none" stroke="#b3b9c0" stroke-width="2.0" />
<path d="M2906.78 924.52 L2906.48 920.84 L2901.52 920.84 L2901.22 924.52 L2897.52 926.65 L2894.19 925.07 L2891.71 929.37 L2894.74 931.46 L2894.74 935.74 L2891.71 937.83 L2894.19 942.13 L2897.52 940.55 L2901.22 942.68 L2901.52 946.36 L2906.48 946.36 L2906.78 942.68 L2910.48 940.55 L2913.81 942.13 L2916.29 937.83 L2913.26 935.74 L2913.26 931.46 L2916.29 929.37 L2913.81 925.07 L2910.48 926.65 Z M2899.00 933.60 a5.0 5.0 0 1 0 10.0 0 a5.0 5.0 0 1 0 -10.0 0 Z" fill="#6e6e6e" fill-rule="evenodd" stroke="#6e6e6e" stroke-width="1.2" stroke-linejoin="round"/>
<rect x="2944.00" y="932.00" width="24.00" height="4.00" fill="#6e6e6e" />
<polygon points="61.80,978.00 61.80,1001.80 81.80,989.90" fill="#32ac60" />
<g transform="translate(76.0 1036.8) rotate(-45)">
<rect x="-24.00" y="-3.00" width="20.00" height="6.00" fill="#6e6e6e" />
<circle cx="0.00" cy="0.00" r="7.90" fill="#6e6e6e" />
<path d="M0.6 -2.9 L9 -2.9 L9 2.9 L0.6 2.9 Z" fill="#f2f2f2" />
</g>
<rect x="50.40" y="1074.00" width="39.50" height="2.00" fill="#c9c9c9" />
<rect x="59.90" y="1098.10" width="20.10" height="19.80" fill="#b9b9b9" />
<path d="M62.6 1151.8 L65.0 1148.3 L74.8 1148.3 L77.2 1151.8 L84.1 1151.8 L84.1 1171.9 L56.0 1171.9 L56.0 1151.8 Z" fill="#b5b5b5" />
<circle cx="69.90" cy="1161.80" r="7.10" fill="#f2f2f2" />
<circle cx="69.90" cy="1161.80" r="3.80" fill="#b5b5b5" />
<path d="M63.6 1198.4 L69.4 1203.4 M76.0 1198.4 L70.2 1203.4" stroke="#bebebe" stroke-width="3.0" fill="none"/>
<path d="M61.9 1209.8 C61.9 1205.6 64.6 1202.4 69.8 1202.4 C75.0 1202.4 77.8 1205.6 77.8 1209.8 L69.8 1209.8 L69.8 1225.7 C65.0 1225.4 61.9 1222.2 61.9 1217.6 Z" fill="#bebebe" />
<rect x="57.90" y="1206.90" width="24.10" height="2.90" fill="#bebebe" />
<rect x="57.90" y="1212.80" width="11.90" height="3.00" fill="#bebebe" />
<rect x="57.90" y="1219.80" width="7.00" height="2.90" fill="#bebebe" />
<rect x="65.80" y="1209.80" width="4.00" height="3.00" fill="#f2f2f2" />
<rect x="65.80" y="1215.80" width="4.00" height="4.00" fill="#f2f2f2" />
<rect x="73.80" y="1209.80" width="4.90" height="2.00" fill="#bebebe" />
<polygon points="74.10,1214.10 86.00,1214.10 86.00,1225.70" fill="#bebebe" />
<path d="M73.90 1226.00 L81.90 1218.20" fill="none" stroke="#bebebe" stroke-width="3.8" />
<path d="M62.0 1257.8 L62.0 1251.8 L82.0 1251.8 L82.0 1276.1 L62.0 1276.1 L62.0 1270.0" fill="none" stroke="#bebebe" stroke-width="3.8"/>
<rect x="55.90" y="1262.10" width="12.60" height="3.60" fill="#bebebe" />
<polygon points="68.20,1255.80 76.10,1263.90 68.20,1272.00" fill="#bebebe" />
<rect x="50.00" y="1296.00" width="39.90" height="2.00" fill="#c9c9c9" />
<rect x="58.00" y="1320.10" width="14.10" height="9.40" fill="#6e6e6e" />
<rect x="74.20" y="1320.10" width="7.80" height="9.40" fill="#6e6e6e" />
<rect x="58.00" y="1332.00" width="24.00" height="7.80" fill="#6e6e6e" />
<rect x="50.00" y="1362.00" width="39.90" height="2.00" fill="#c9c9c9" />
<path d="M74.4 1381.6 L84.1 1391.6 L76.2 1396.2 L75.2 1404.6 L69.4 1398.8 L56.0 1410.0 L55.4 1409.4 L66.6 1396.0 L61.0 1390.2 L69.6 1389.4 Z" fill="#6e6e6e" />
<rect x="126.00" y="982.40" width="4.20" height="21.40" fill="#6e6e6e" />
<path d="M119.60 990.80 L128.10 982.20 L136.60 990.80" fill="none" stroke="#6e6e6e" stroke-width="4.2" />
<rect x="126.00" y="1032.00" width="4.20" height="21.40" fill="#6e6e6e" />
<path d="M119.60 1045.00 L128.10 1053.60 L136.60 1045.00" fill="none" stroke="#6e6e6e" stroke-width="4.2" />
<rect x="116.00" y="1083.70" width="24.10" height="4.20" fill="#6e6e6e" />
<path d="M116 1096.4 L134.6 1096.4 A4.7 4.7 0 0 1 134.6 1105.8 L131 1105.8" fill="none" stroke="#6e6e6e" stroke-width="4.2"/>
<polygon points="126.40,1105.80 132.80,1100.00 132.80,1111.80" fill="#6e6e6e" />
<rect x="116.00" y="1103.70" width="5.80" height="4.20" fill="#6e6e6e" />
<rect x="116.00" y="1138.00" width="8.10" height="4.00" fill="#6e6e6e" />
<rect x="116.00" y="1146.00" width="8.10" height="4.00" fill="#6e6e6e" />
<rect x="116.00" y="1153.90" width="24.10" height="4.00" fill="#6e6e6e" />
<rect x="131.70" y="1133.90" width="4.20" height="11.00" fill="#6e6e6e" />
<polygon points="126.40,1143.70 141.40,1143.70 133.90,1151.40" fill="#6e6e6e" />
<rect x="120.20" y="1187.90" width="15.70" height="6.10" fill="#6e6e6e" />
<rect x="113.90" y="1196.00" width="28.10" height="10.00" fill="#6e6e6e" rx="2" />
<rect x="138.00" y="1197.80" width="2.20" height="2.20" fill="#ffffff" />
<rect x="121.40" y="1203.60" width="13.30" height="9.00" fill="#f2f2f2" stroke="#6e6e6e" stroke-width="2.4"/>
<rect x="118.00" y="1240.20" width="19.90" height="3.80" fill="#6e6e6e" />
<rect x="124.10" y="1237.80" width="8.00" height="3.00" fill="#6e6e6e" />
<path d="M120.2 1246.0 L135.9 1246.0 L135.9 1260.6 Q135.9 1263.9 132.6 1263.9 L123.5 1263.9 Q120.2 1263.9 120.2 1260.6 Z" fill="#6e6e6e" />
<polygon points="64.20,1819.00 64.20,1838.60 79.50,1828.80" fill="#6e6e6e" />
<rect x="173.90" y="1820.50" width="3.80" height="3.30" fill="#6e6e6e" />
<rect x="180.20" y="1820.50" width="14.10" height="3.30" fill="#6e6e6e" />
<rect x="173.90" y="1826.60" width="3.80" height="3.30" fill="#6e6e6e" />
<rect x="180.20" y="1826.60" width="14.10" height="3.30" fill="#6e6e6e" />
<rect x="173.90" y="1832.70" width="3.80" height="3.30" fill="#6e6e6e" />
<rect x="180.20" y="1832.70" width="14.10" height="3.30" fill="#6e6e6e" />
<circle cx="319.00" cy="1827.60" r="9.90" fill="#6e6e6e" />
<rect x="317.40" y="1821.30" width="3.40" height="7.60" fill="#f2f2f2" />
<rect x="317.40" y="1830.80" width="3.40" height="3.00" fill="#f2f2f2" />
<path d="M497.6 1824.6 A9.4 9.4 0 1 0 489.6 1836.0" fill="none" stroke="#7e7e7e" stroke-width="2.6"/>
<path d="M488.60 1820.60 L488.60 1827.00 L485.00 1830.60" fill="none" stroke="#7e7e7e" stroke-width="2.2" />
<polygon points="492.30,1826.60 492.30,1840.90 503.80,1833.75" fill="#6e6e6e" />
<rect x="625.90" y="1818.00" width="21.90" height="19.60" fill="#6e6e6e" />
<path d="M629.80 1822.40 L634.40 1826.80 L629.80 1831.20" fill="none" stroke="#f2f2f2" stroke-width="2.0" />
<rect x="636.00" y="1831.60" width="8.00" height="2.00" fill="#f2f2f2" />
<polygon points="784.00,1826.43 792.84,1817.00 799.04,1817.00 799.04,1818.19 794.20,1822.36 799.64,1827.37 801.25,1828.31 809.50,1836.30 805.59,1840.46 796.92,1831.79 796.66,1830.43 791.14,1825.24 787.49,1829.49" fill="#6e6e6e" />
<path d="M2852.4 1840.2 L2852.4 1829.0 A11.2 11.2 0 1 0 2841.2 1840.2 Z" fill="none" stroke="#6e6e6e" stroke-width="2.6"/>
<rect x="17.2" y="1859.5" width="17.6" height="16.6" fill="none" stroke="#6e6e6e" stroke-width="2"/>
<path d="M13.20 1863.00 L13.20 1880.40 L31.40 1880.40" fill="none" stroke="#6e6e6e" stroke-width="2.0" />
<rect x="2980.20" y="1868.20" width="16.00" height="11.80" fill="#6e6e6e" />
<path d="M2976.0 1868.4 L2976.0 1864.6 A4.4 4.4 0 0 1 2984.8 1864.6 L2984.8 1868.4" fill="none" stroke="#6e6e6e" stroke-width="2.4"/>
</svg>
</div></body></html>
